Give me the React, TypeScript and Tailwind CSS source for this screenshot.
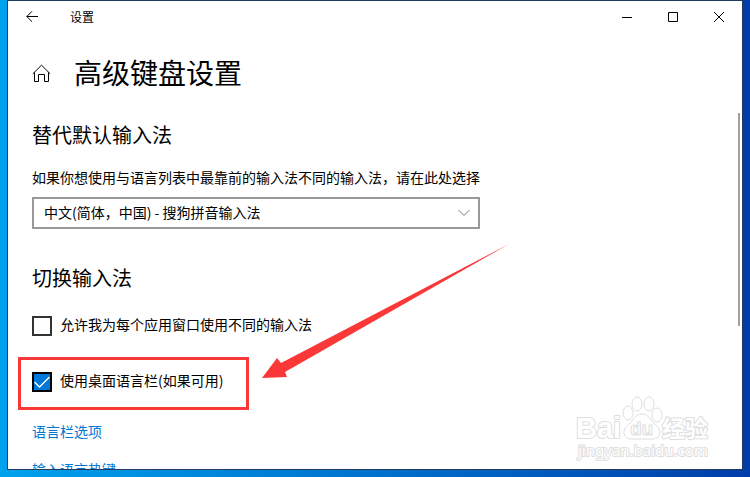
const captionButtons = [
  { label: '最小化', path: 'M0 5.5h10' },
  { label: '最大化', path: 'M.5 .5h9v9h-9z' },
  { label: '关闭', path: 'M0 0l10 10M10 0L0 10' },
]

const links = ['语言栏选项', '输入语言热键']

function TitleBar() {
  return (
    <header className="flex h-8 shrink-0 items-center justify-between">
      <div className="flex items-center">
        <button type="button" aria-label="返回" className="flex h-8 w-12 items-center justify-center">
          <svg width="12" height="12" viewBox="0 0 12 12" fill="none" stroke="currentColor">
            <path d="M12 5.5H.8M6 .3L.8 5.5 6 10.7" />
          </svg>
        </button>
        <span className="ml-[14px] text-xs">设置</span>
      </div>
      <div className="flex">
        {captionButtons.map((button) => (
          <button
            key={button.label}
            type="button"
            aria-label={button.label}
            className="flex h-8 w-[46px] items-center justify-center"
          >
            <svg width="10" height="10" viewBox="0 0 10 10" fill="none" stroke="currentColor">
              <path d={button.path} />
            </svg>
          </button>
        ))}
      </div>
    </header>
  )
}

function CheckOption({ id, label, defaultChecked }: { id: string; label: string; defaultChecked?: boolean }) {
  return (
    <div className="flex items-center gap-2">
      <div className="relative flex">
        <input
          id={id}
          type="checkbox"
          defaultChecked={defaultChecked}
          className="peer size-5 appearance-none border-2 border-[#333] bg-white checked:border-black checked:bg-[#0078d7]"
        />
        <svg
          className="pointer-events-none absolute inset-0 hidden peer-checked:block"
          width="20"
          height="20"
          viewBox="0 0 20 20"
          fill="none"
          stroke="white"
          strokeWidth="1.3"
        >
          <path d="M2.5 10l5 5L17.5 5" />
        </svg>
      </div>
      <label htmlFor={id} className="pb-1 text-sm leading-[18px]">{label}</label>
    </div>
  )
}

function Watermark() {
  return (
    <svg
      className="pointer-events-none absolute right-7 bottom-1 overflow-visible"
      width="138"
      height="70"
      viewBox="0 0 138 70"
      fill="white"
      stroke="#dedede"
      strokeWidth="1"
      aria-hidden="true"
    >
      <g strokeWidth="2" paintOrder="stroke" strokeLinejoin="round">
        <text x="0" y="43" fontSize="29" className="font-['Liberation_Sans',sans-serif] font-bold">Bai</text>
        <text x="86" y="42" fontSize="23" className="font-['Noto_Sans_CJK_SC',sans-serif] font-bold">经验</text>
        <text x="2" y="61" fontSize="15" className="font-['Noto_Sans',sans-serif] font-normal">jingyan.baidu.com</text>
      </g>
      <ellipse cx="52" cy="18" rx="5" ry="7" />
      <ellipse cx="61" cy="9" rx="5" ry="7" />
      <ellipse cx="73" cy="9" rx="5" ry="7" />
      <ellipse cx="81" cy="20" rx="5" ry="7" />
      <path d="M66 19c-7 0-8 6-13 10-8 6-6 15 2 15h22c8 0 9-9 3-14-5-4-7-11-14-11z" />
      <text x="54" y="40" fontSize="19" className="font-['Liberation_Sans',sans-serif] font-bold">du</text>
    </svg>
  )
}

export default function App() {
  return (
    <div className="h-screen bg-linear-to-r from-[#00a2ed] via-[#0072cc] to-[#003da8] px-[7px] pb-[7px] font-['Noto_Sans_CJK_SC',sans-serif] text-black">
      <div className="relative flex h-full flex-col overflow-hidden border border-[#1f3a5c] bg-white">
        <TitleBar />

        <main className="px-6">
          <div className="mt-5 flex items-center gap-[23px]">
            <a href="#home" aria-label="主页">
              <svg width="19" height="18" viewBox="0 0 19 18" fill="none" stroke="currentColor">
                <path d="M.8 9.8L9.5 1.2l8.7 8.6M2.5 8.5v9h4v-7h6v7h4v-9" />
              </svg>
            </a>
            <h1 className="pb-[2px] text-[28px] leading-[38px]">高级键盘设置</h1>
          </div>

          <section className="mt-7">
            <h2 className="text-xl leading-7">替代默认输入法</h2>
            <label htmlFor="input-method" className="mt-[18px] block text-sm leading-5">
              如果你想使用与语言列表中最靠前的输入法不同的输入法，请在此处选择
            </label>
            <div className="relative mt-[10px] max-w-[448px]">
              <select
                id="input-method"
                className="block h-8 w-full appearance-none border-2 border-[#999] bg-white px-[10px] pb-[2px] text-sm leading-5"
              >
                <option>中文(简体，中国) - 搜狗拼音输入法</option>
              </select>
              <svg
                className="pointer-events-none absolute top-3 right-[10px]"
                width="12"
                height="8"
                viewBox="0 0 12 8"
                fill="none"
                stroke="#777"
              >
                <path d="M.5 1L6 6.5 11.5 1" />
              </svg>
            </div>
          </section>

          <section className="mt-[35px]">
            <h2 className="text-xl leading-7">切换输入法</h2>
            <div className="mt-[23px]">
              <CheckOption id="per-app" label="允许我为每个应用窗口使用不同的输入法" />
            </div>
            <div className="relative mt-[34px] w-fit">
              <CheckOption id="language-bar" label="使用桌面语言栏(如果可用)" defaultChecked />
              <div className="pointer-events-none absolute -top-[14px] -right-[26px] -bottom-[17px] -left-[14px] border-3 border-[#fb3838]" />
            </div>
            <div className="mt-7 flex flex-col items-start gap-[18px] text-sm leading-5 text-[#0078d7]">
              {links.map((link) => (
                <a key={link} href="#options">{link}</a>
              ))}
            </div>
          </section>
        </main>

        {/* Scroll thumb */}
        <div className="absolute top-28 right-[2px] h-[213px] w-[2px] bg-[#a0a0a0]" />

        {/* Arrow to the highlighted option */}
        <svg
          className="pointer-events-none absolute top-[243px] left-[254px]"
          width="248"
          height="136"
          viewBox="0 0 248 136"
          fill="#fb3838"
        >
          <path d="M0 134L15 114l4 5L247 0 23 128l2 5z" />
        </svg>

        <Watermark />
      </div>
    </div>
  )
}
